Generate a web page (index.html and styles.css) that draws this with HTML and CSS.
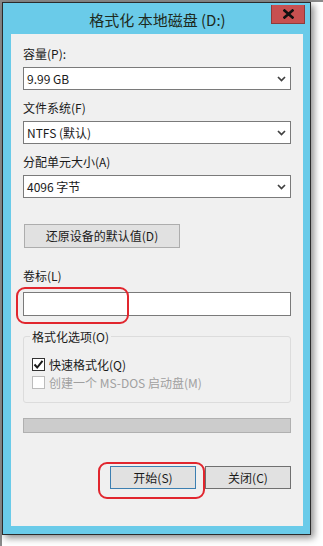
FILE: index.html
```html
<!DOCTYPE html>
<html lang="zh-CN">
<head>
    <meta charset="UTF-8">
    <meta name="viewport" content="width=device-width, initial-scale=1.0">
    <title>格式化 本地磁盘 (D:)</title>
    <link rel="stylesheet" href="styles.css">
</head>
<body>

<div class="desk">
    <div class="window">
        <div class="titlebar">格式化 本地磁盘 (D:)</div>
        <div class="close">
            <svg width="11" height="10" viewBox="0 0 11 10"><path d="M1.5 1.5 L9.5 8.5 M9.5 1.5 L1.5 8.5" stroke="#111" stroke-width="2.6" stroke-linecap="square"/></svg>
        </div>

        <div class="panel">
            <div class="field-label first">容量(P):</div>
            <div class="combo">
                <span>9.99 GB</span>
                <svg class="chevron" width="9" height="6" viewBox="0 0 9 6"><path d="M1 1 L4.5 4.5 L8 1" fill="none" stroke="#404040" stroke-width="1.7"/></svg>
            </div>

            <div class="field-label">文件系统(F)</div>
            <div class="combo">
                <span>NTFS (默认)</span>
                <svg class="chevron" width="9" height="6" viewBox="0 0 9 6"><path d="M1 1 L4.5 4.5 L8 1" fill="none" stroke="#404040" stroke-width="1.7"/></svg>
            </div>

            <div class="field-label">分配单元大小(A)</div>
            <div class="combo">
                <span>4096 字节</span>
                <svg class="chevron" width="9" height="6" viewBox="0 0 9 6"><path d="M1 1 L4.5 4.5 L8 1" fill="none" stroke="#404040" stroke-width="1.7"/></svg>
            </div>

            <div class="btn restore">还原设备的默认值(D)</div>

            <div class="field-label volume">卷标(L)</div>
            <div class="textbox"></div>

            <div class="group">
                <div class="legend">格式化选项(O)</div>
                <div class="check-row">
                    <span class="box">
                        <svg width="11" height="11" viewBox="0 0 11 11"><path d="M1.5 5.5 L4.2 8.5 L9.5 1.8" fill="none" stroke="#1a1a1a" stroke-width="2"/></svg>
                    </span>
                    快速格式化(Q)
                </div>
                <div class="check-row disabled">
                    <span class="box"></span>
                    创建一个 MS-DOS 启动盘(M)
                </div>
            </div>

            <div class="progress"></div>

            <div class="actions">
                <div class="btn default">开始(S)</div>
                <div class="btn">关闭(C)</div>
            </div>
        </div>
    </div>

    <div class="mark mark-volume"></div>
    <div class="mark mark-start"></div>
</div>

</body>
</html>
```

FILE: styles.css
```css
body {
    margin: 0;
    background: #fff;
    font-family: "Noto Sans CJK SC", "Microsoft YaHei", sans-serif;
    font-size: 12px;
    color: #1a1a1a;
}

.desk {
    position: relative;
    width: 323px;
    height: 546px;
    overflow: hidden;
    box-shadow: inset 2px 2px 0 #8a8a8a;
}

.window {
    position: relative;
    box-sizing: border-box;
    width: 309px;
    height: 533px;
    margin: 2px 0 0 2px;
    border: 1px solid #2b2b2b;
    background: #6acbe9;
    padding: 0 7px 8px 8px;
    box-shadow: 3px 3px 7px rgba(0, 0, 0, 0.45);
}

.titlebar {
    height: 30px;
    padding-top: 1px;
    line-height: 31px;
    text-align: center;
    font-size: 15px;
    color: #1e2a20;
    margin-right: -1px;
}

.close {
    position: absolute;
    top: 2px;
    right: 5px;
    width: 34px;
    height: 19px;
    box-sizing: border-box;
    background: #c75050;
    border: 1px solid #8e3b3b;
    border-top: none;
    display: flex;
    align-items: center;
    justify-content: center;
}

.panel {
    height: 492px;
    box-sizing: border-box;
    background: #f0f0f0;
    padding: 12px 12px 0 12px;
}

.field-label {
    line-height: 16px;
    margin-top: 10px;
    margin-bottom: 5px;
}

.field-label.first {
    margin-top: 0;
}

.combo {
    box-sizing: border-box;
    height: 23px;
    border: 1px solid #7a7a7a;
    background: #fff;
    display: flex;
    align-items: center;
    justify-content: space-between;
    padding: 0 4px 0 3px;
}

.btn {
    box-sizing: border-box;
    height: 23px;
    line-height: 21px;
    text-align: center;
    background: #e1e1e1;
    border: 1px solid #707070;
}

.restore {
    width: 156px;
    height: 24px;
    margin: 26px 0 0 1px;
    border-color: #adadad;
}

.field-label.volume {
    margin-top: 20px;
    margin-bottom: 8px;
}

.textbox {
    box-sizing: border-box;
    height: 24px;
    border: 1px solid #7a7a7a;
    background: #fff;
}

.group {
    box-sizing: border-box;
    height: 67px;
    margin-top: 20px;
    border: 1px solid #dcdcdc;
    border-radius: 3px;
    padding-left: 8px;
}

.legend {
    width: max-content;
    line-height: 16px;
    margin: -8px 0 0 -2px;
    padding: 0 2px;
    background: #f0f0f0;
}

.check-row {
    display: flex;
    align-items: center;
    height: 18px;
}

.legend + .check-row {
    margin-top: 10px;
}

.box {
    box-sizing: border-box;
    width: 13px;
    height: 13px;
    border: 1px solid #333;
    background: #fff;
    margin-right: 4px;
    display: flex;
    align-items: center;
    justify-content: center;
}

.disabled {
    color: #a0a0a0;
}

.disabled .box {
    border-color: #bcbcbc;
}

.progress {
    box-sizing: border-box;
    height: 15px;
    margin-top: 15px;
    border: 1px solid #b0b0b0;
    background: #cccccc;
}

.actions {
    display: flex;
    justify-content: flex-end;
    gap: 9px;
    margin-top: 33px;
}

.actions .btn {
    width: 86px;
}

.btn.default {
    border-color: #3c7fb1;
}

.mark {
    position: absolute;
    box-sizing: border-box;
    border: 2px solid #e1262e;
    border-radius: 9px;
}

.mark-volume {
    left: 16px;
    top: 287px;
    width: 113px;
    height: 37px;
}

.mark-start {
    left: 98px;
    top: 462px;
    width: 107px;
    height: 37px;
}
```
